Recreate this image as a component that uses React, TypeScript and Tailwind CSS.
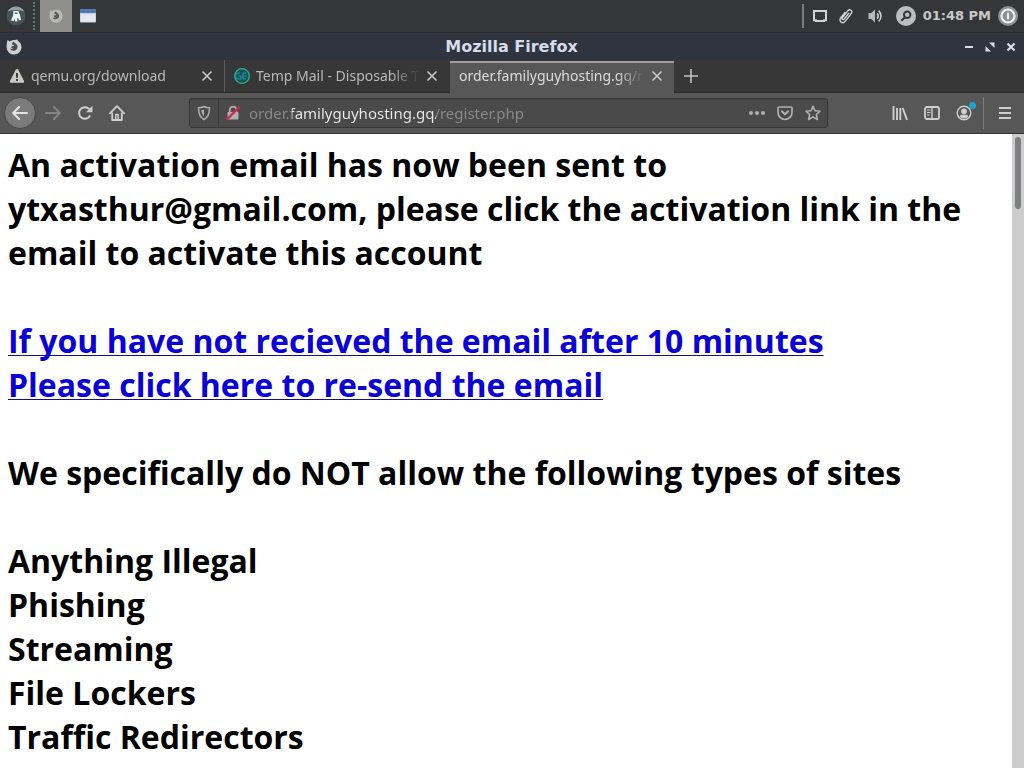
import type { ReactNode } from 'react';

type Tab = {
  title: string;
  icon?: ReactNode;
  active?: boolean;
};

const TABS: Tab[] = [
  { title: 'qemu.org/download', icon: <WarningIcon /> },
  { title: 'Temp Mail - Disposable T', icon: <TempMailIcon /> },
  { title: 'order.familyguyhosting.gq/r', active: true },
];

const BANNED_SITES = [
  'Anything Illegal',
  'Phishing',
  'Streaming',
  'File Lockers',
  'Traffic Redirectors',
];

export default function App() {
  return (
    <div className="flex h-screen flex-col overflow-hidden bg-white">
      <Panel />
      <TitleBar />
      <TabStrip />
      <NavBar />
      <div className="flex min-h-0 flex-1">
        <Page />
        {/* Scrollbar */}
        <div className="w-3 shrink-0 bg-[#cccccc] px-[3px] pt-[3px]" aria-hidden>
          <div className="h-[72px] rounded-full bg-[#7c7f7f]" />
        </div>
      </div>
    </div>
  );
}

/* Desktop panel along the top edge */
function Panel() {
  return (
    <header className="flex h-8 shrink-0 items-center bg-[#353637] pr-1.5">
      <button type="button" aria-label="Applications" className="ml-1.5 size-5">
        <svg viewBox="0 0 18 18" className="size-5">
          <circle cx="9" cy="9" r="8.500" fill="#3f5658" />
          <path d="M1.500 5C3.200 1.800 6 .5 9 .5S14.800 1.800 16.500 5c-4-1.600-11-1.600-15 0z" fill="#8fa3a6" />
          <path
            d="M6.600 4.600h4.600l1.400 3.400 1 4.600-2 .3-.6-2.200-.9.200.2 3H8.200L8 11.300l-1 2.300-2.600-.5 2-4.500z"
            fill="#f0f3f3"
          />
          <path d="M7.800 6h2.600v1.100H7.800z" fill="#3f5658" />
        </svg>
      </button>
      <div className="ml-[7px] mr-[5px] h-7 border-l-2 border-dotted border-[#6f7070]" />
      <button
        type="button"
        aria-label="Mozilla Firefox"
        className="flex h-8 w-8 items-center justify-center bg-[#8f908e]"
      >
        <FirefoxIcon back="#b9bab8" front="#5a5b5b" size="size-[14px]" />
      </button>
      <button type="button" aria-label="Show window" className="ml-2 size-4">
        <svg viewBox="0 0 16 16" className="size-4">
          <rect y="1.500" width="16" height="13" rx="1" fill="#c9d4e6" />
          <path d="M0 2.500a1 1 0 0 1 1-1h14a1 1 0 0 1 1 1V5H0z" fill="#4d78b8" />
          <rect x="1" y="6" width="14" height="7.500" fill="#e4e8ee" />
        </svg>
      </button>

      <div className="ml-auto flex items-center text-[#d2d2d2]">
        <div className="mr-2 h-6 w-0.5 bg-[#7d7e7e]" />
        <svg viewBox="0 0 16 16" className="mr-2.5 size-4" fill="none" stroke="currentColor" strokeWidth="2">
          <path d="M2 3h12v9.200h-2v.9H4v-.9H2z" />
        </svg>
        <svg
          viewBox="0 0 16 16"
          className="mr-3.5 size-4"
          fill="none"
          stroke="currentColor"
          strokeWidth="1.400"
          strokeLinecap="round"
        >
          <path d="M10.800 5.200 6.200 11c-.5.700-1.300.8-1.800.4s-.5-1.100 0-1.800l5.300-6.700c.9-1.100 2.300-1.400 3.300-.6s1.100 2.200.2 3.300l-5.900 7.500c-1.200 1.500-3 1.900-4.300.9s-1.400-2.900-.2-4.400l4-5" />
        </svg>
        <svg viewBox="0 0 16 16" className="mr-3 size-4" fill="none" stroke="currentColor">
          <path d="M.5 5h2.700L7 1.500v13L3.200 11H.5z" fill="#b8b8b8" stroke="none" />
          <path d="M9 5.500a3.300 3.300 0 0 1 0 5" strokeWidth="1.700" />
          <path d="M10.700 2.600a7.600 7.600 0 0 1 0 10.800" strokeWidth="1.500" />
        </svg>
        <svg viewBox="0 0 20 20" className="mr-[7px] size-5">
          <circle cx="10" cy="10" r="10" fill="#bdbdbd" />
          <circle cx="11.200" cy="8.800" r="3.200" fill="none" stroke="#353637" strokeWidth="2" />
          <path d="m9 11.200-3.600 3.600" stroke="#353637" strokeWidth="2.200" />
        </svg>
        <time className="mr-[7px] font-['DejaVu_Sans',sans-serif] text-[13px] font-bold leading-5 text-[#c8c8c8]">
          01:48 PM
        </time>
        <button type="button" aria-label="Session" className="size-5">
          <svg viewBox="0 0 20 20" className="size-5">
            <circle cx="10" cy="10" r="10" fill="#8e8f8f" />
            <circle cx="10" cy="10" r="6.500" fill="none" stroke="#efefef" strokeWidth="2.200" />
            <path d="M10 6.800v6.400" stroke="#efefef" strokeWidth="2" />
          </svg>
        </button>
      </div>
    </header>
  );
}

function TitleBar() {
  return (
    <div className="grid h-7 shrink-0 grid-cols-[1fr_auto_1fr] items-center border-t border-[#2a2c30] bg-[#30343f] pl-1.5 pr-[7px]">
      <FirefoxIcon back="#cfd0d0" front="#4a4c50" size="size-4" />
      <span className="font-['DejaVu_Sans',sans-serif] text-base font-bold leading-5 text-[#d5dcec]">
        Mozilla Firefox
      </span>
      <div className="flex justify-end gap-[9px] text-[#d5dcec]">
        <button type="button" aria-label="Minimize" className="size-3">
          <svg viewBox="0 0 12 12" className="size-3">
            <path d="M2 6h8" stroke="currentColor" strokeWidth="2" />
          </svg>
        </button>
        <button type="button" aria-label="Restore" className="size-3">
          <svg viewBox="0 0 12 12" className="size-3" fill="currentColor">
            <path d="M5 1.500h5.500V7zM1.500 5v5.500H7z" />
          </svg>
        </button>
        <button type="button" aria-label="Close window" className="size-3">
          <svg viewBox="0 0 12 12" className="size-3">
            <path d="m2.500 2.500 7 7m0-7-7 7" stroke="currentColor" strokeWidth="2.200" />
          </svg>
        </button>
      </div>
    </div>
  );
}

function TabStrip() {
  return (
    <div className="flex h-[33px] shrink-0 gap-px border-b border-[#2a2a2a] bg-[#373737] font-['Noto_Sans',sans-serif]">
      {TABS.map((tab) => (
        <TabItem key={tab.title} tab={tab} />
      ))}
      <button
        type="button"
        aria-label="New tab"
        className="flex w-8 items-center justify-center text-[#c4c4c4]"
      >
        <svg viewBox="0 0 16 16" className="size-4">
          <path d="M8 1v14M1 8h14" stroke="currentColor" strokeWidth="1.600" />
        </svg>
      </button>
    </div>
  );
}

function TabItem({ tab }: { tab: Tab }) {
  const look = tab.active
    ? '-mb-px mt-px border-t-2 border-t-[#a0a0a0] bg-[#575757] pb-1 text-[#dcdcdc]'
    : 'pb-px text-[#b9b9b9]';

  return (
    <div className={`flex w-[224px] min-w-0 items-center pl-[9px] pr-2.5 first:shadow-[1px_0_0_#5c5c5c] ${look}`}>
      <button type="button" className="flex min-w-0 flex-1 items-center gap-1.5 text-left">
        {tab.icon}
        <span className="min-w-0 flex-1 overflow-hidden whitespace-nowrap text-sm leading-5 [mask-image:linear-gradient(to_left,transparent,black_28px)]">
          {tab.title}
        </span>
      </button>
      <button type="button" aria-label={`Close ${tab.title}`} className="ml-1.5 size-3.5 shrink-0 text-[#c8c8c8]">
        <svg viewBox="0 0 14 14" className="size-3.5">
          <path d="m2.500 2.500 9 9m0-9-9 9" stroke="currentColor" strokeWidth="1.600" />
        </svg>
      </button>
    </div>
  );
}

function NavBar() {
  return (
    <nav className="flex h-[41px] shrink-0 items-center border-b border-[#333333] bg-[#575757] pl-1 text-[#cfcfcf]">
      <button
        type="button"
        aria-label="Back"
        className="flex size-8 items-center justify-center rounded-full border border-[#464646] bg-[#7b7b7b] text-[#e4e4e4]"
      >
        <Arrow />
      </button>
      <button type="button" aria-label="Forward" disabled className="ml-[9px] size-4 text-[#858585]">
        <Arrow flip />
      </button>
      <button type="button" aria-label="Reload" className="ml-4 size-4">
        <svg viewBox="0 0 16 16" className="size-4" fill="none" stroke="currentColor" strokeWidth="2">
          <path d="M13.200 10.300A5.800 5.800 0 1 1 12.300 4.200" />
          <path d="M15.500.8v6.400H9z" fill="currentColor" stroke="none" />
        </svg>
      </button>
      <button type="button" aria-label="Home" className="ml-4 size-4">
        <svg viewBox="0 0 16 16" className="size-4" fill="none" stroke="currentColor" strokeWidth="1.800" strokeLinejoin="round">
          <path d="M.9 8.300 8 1.200l7.100 7.100" strokeLinecap="round" />
          <path d="M3.200 7.500V15h9.600V7.500" />
          <path d="M6.800 15V9.500h2.400V15" strokeWidth="1.500" />
        </svg>
      </button>

      <div className="ml-16 flex h-[30px] min-w-0 flex-1 items-center rounded-[3px] border border-[#363636] bg-[#4a4a4a] pl-1.5 pr-1.5 text-[#b0b0b0]">
        <button type="button" aria-label="Tracking protection" className="size-4 shrink-0">
          <svg viewBox="0 0 16 16" className="size-4" fill="none" stroke="currentColor" strokeWidth="1.500">
            <path d="M8 1.500c1.700.9 3.500 1.300 5.500 1.300C13.500 9 12 12.500 8 14.600 4 12.500 2.500 9 2.500 2.800 4.500 2.800 6.300 2.400 8 1.500z" />
            <path d="M8 4.400v7c-1.700-1.400-2.500-3.500-2.600-6.300C6.300 5 7.200 4.800 8 4.400z" fill="currentColor" stroke="none" />
          </svg>
        </button>
        <div className="mx-1.5 h-7 w-px bg-[#3a3a3a]" />
        <button type="button" aria-label="Connection is not secure" className="size-4 shrink-0">
          <svg viewBox="0 0 16 16" className="size-4" fill="none">
            <path d="M4.800 8V4.800a3.200 3.200 0 0 1 6.400 0V8" stroke="#b0b0b0" strokeWidth="1.800" />
            <rect x="2.500" y="7" width="11" height="7.500" rx="1" fill="#b0b0b0" />
            <path d="M1.500 14.800 14.800 1.500" stroke="#d2264f" strokeWidth="2.400" />
          </svg>
        </button>
        {/* Only the registered domain is bright, so the text is filled from a stepped gradient */}
        <input
          type="text"
          aria-label="Address"
          defaultValue="order.familyguyhosting.gq/register.php"
          className="ml-2 h-7 min-w-0 flex-1 bg-[linear-gradient(to_right,#8a8a8a_43px,#ececec_43px,#ececec_187px,#8a8a8a_187px)] bg-clip-text font-['Noto_Sans',sans-serif] text-[15px] text-transparent outline-none"
        />
        <button type="button" aria-label="Page actions" className="size-4 shrink-0">
          <svg viewBox="0 0 16 16" className="size-4" fill="currentColor">
            <circle cx="2" cy="8" r="2" />
            <circle cx="8" cy="8" r="2" />
            <circle cx="14" cy="8" r="2" />
          </svg>
        </button>
        <button type="button" aria-label="Save to Pocket" className="ml-3 size-4 shrink-0">
          <svg viewBox="0 0 16 16" className="size-4" fill="none" stroke="currentColor" strokeWidth="1.700">
            <path d="M2 2h12a1 1 0 0 1 1 1v4.500a7 7 0 0 1-14 0V3a1 1 0 0 1 1-1z" />
            <path d="m4.800 6.300 3.200 3 3.200-3" strokeWidth="2" strokeLinecap="round" strokeLinejoin="round" />
          </svg>
        </button>
        <button type="button" aria-label="Bookmark this page" className="ml-3 size-4 shrink-0">
          <svg viewBox="0 0 16 16" className="size-4" fill="none" stroke="currentColor" strokeWidth="1.600" strokeLinejoin="round">
            <path d="m8 1.200 2 4.500 5 .5-3.700 3.300 1.100 5L8 11.900l-4.400 2.600 1.100-5L1 6.200l5-.5z" />
          </svg>
        </button>
      </div>

      <button type="button" aria-label="Library" className="ml-16 size-4">
        <svg viewBox="0 0 16 16" className="size-4" fill="none" stroke="currentColor" strokeWidth="1.900">
          <path d="M1.500 1v14M5 3v12M8.300 3v12M10.700 3l4.300 12" />
        </svg>
      </button>
      <button type="button" aria-label="Sidebars" className="ml-4 size-4">
        <svg viewBox="0 0 16 16" className="size-4" fill="none" stroke="currentColor">
          <rect x="1" y="2" width="14" height="12" rx="2" strokeWidth="1.800" />
          <path d="M8 2v12" strokeWidth="1.400" />
          <path d="M3 5h3.500M3 7.500h3.500M3 10h2.500" strokeWidth="1.200" />
        </svg>
      </button>
      <button type="button" aria-label="Account" className="relative ml-4 size-4">
        <svg viewBox="0 0 16 16" className="size-4" fill="none" stroke="currentColor">
          <circle cx="8" cy="8" r="6.800" strokeWidth="1.400" />
          <circle cx="8" cy="6.300" r="2.900" fill="currentColor" stroke="none" />
          <path d="M3.500 11.300c1-1.500 2-1.600 2.800-1.600h3.400c.8 0 1.800.1 2.800 1.600-2.600 3-6.400 3-9 0z" fill="currentColor" stroke="none" />
        </svg>
        <span className="absolute -right-1 -top-[3px] size-[7px] rounded-full bg-[#19a5d0]" />
      </button>
      <div className="ml-[11px] h-8 w-px bg-[#7c7c7c]" />
      <button type="button" aria-label="Open menu" className="ml-[13px] mr-[11px] size-4">
        <svg viewBox="0 0 16 16" className="size-4" stroke="currentColor" strokeWidth="2">
          <path d="M2 3h12M2 8h12M2 13h12" />
        </svg>
      </button>
    </nav>
  );
}

function Page() {
  return (
    <main className="min-w-0 flex-1 overflow-hidden px-2 pt-[9px] font-['Open_Sans',sans-serif] text-[32px] font-bold leading-[44px] text-black">
      <h1>
        An activation email has now been sent to ytxasthur@gmail.com, please
        click the activation link in the email to activate this account
      </h1>
      <p className="mt-11">
        <a
          href="#resend"
          className="text-[#0a00d8] underline decoration-[#150f80] decoration-1 underline-offset-2 [text-decoration-skip-ink:none]"
        >
          If you have not recieved the email after 10 minutes
          <br />
          Please click here to re-send the email
        </a>
      </p>
      <h2 className="mt-11">We specifically do NOT allow the following types of sites</h2>
      <ul className="mt-11">
        {BANNED_SITES.map((site) => (
          <li key={site}>{site}</li>
        ))}
      </ul>
    </main>
  );
}

function Arrow({ flip }: { flip?: boolean }) {
  return (
    <svg
      viewBox="0 0 16 16"
      className={flip ? 'size-4 rotate-180' : 'size-4'}
      fill="none"
      stroke="currentColor"
      strokeWidth="2"
      strokeLinecap="round"
      strokeLinejoin="round"
    >
      <path d="M15 8H1.500M7 2 1.200 8 7 14" />
    </svg>
  );
}

function FirefoxIcon({ back, front, size }: { back: string; front: string; size: string }) {
  return (
    <svg viewBox="0 0 16 16" className={size}>
      <path
        d="M1.600.8 3.600 2.600C5 1.300 7 .8 9 1l2.500-.4.6 1.500c2.100 1.300 3.400 3.500 3.400 6.100A7.400 7.400 0 0 1 8 15.600 7.400 7.400 0 0 1 .6 8.200c0-2.600.3-5.200 1-7.400z"
        fill={back}
      />
      <path
        d="M8.200 2.600c-.2 1 .8 1.500 1.700 2.200 1.300 1 1.900 2.200 1.600 3.800-.4 2-1.900 3.200-3.900 3.200-1.700 0-3-.8-3.600-2.200 1.300.7 2.500.5 3.600-.3-1.200 0-2.300-.4-2.400-1.400.4-.8 1.600-.5 2.700-1.100.4-.6-.2-1-1.600-1.100-.6-1.300.2-2.600 1.900-3.100z"
        fill={front}
      />
    </svg>
  );
}

function WarningIcon() {
  return (
    <svg viewBox="0 0 16 16" className="size-4 shrink-0">
      <path d="M8 1c.6 0 1 .3 1.300.8l5.600 10.900c.5 1.100 0 2.100-1.200 2.100H2.300c-1.200 0-1.700-1-1.200-2.100L6.700 1.800C7 1.300 7.400 1 8 1z" fill="#cbcbc6" />
      <path d="M8 5v4.800M8 11v2" stroke="#373737" strokeWidth="1.900" />
    </svg>
  );
}

function TempMailIcon() {
  return (
    <svg viewBox="0 0 16 16" className="size-4 shrink-0" fill="none">
      <circle cx="8" cy="8" r="7.300" fill="#1d4f55" stroke="#20b89a" strokeWidth="1.300" />
      <path d="M6 5H4.500a1.500 1.500 0 0 0 0 6H7V8H4M9 5h3.500M9 8h4M9 11h3M9 5v6" stroke="#2793a8" strokeWidth="1.200" />
    </svg>
  );
}
